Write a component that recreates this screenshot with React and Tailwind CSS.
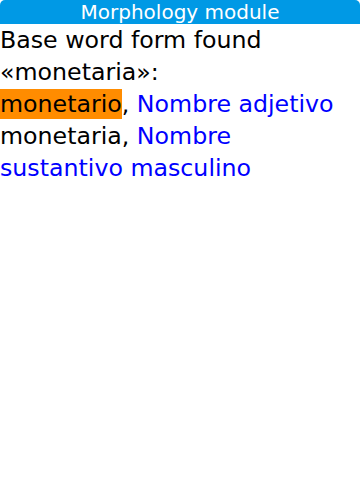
import React from 'react';

const App = () => {
    return (
        <div className="w-[360px] h-[480px] bg-white overflow-hidden font-['DejaVu_Sans',sans-serif]">
            <div className="h-[24px] bg-[#0099e5] rounded-t-[5px] flex items-center justify-center text-white text-[20px] leading-[24px]">
                Morphology module
            </div>
            <div className="text-[23.7px] leading-[32px] text-black">
                <div>Base word form found «monetaria»:</div>
                <div>
                    <span className="bg-[#ff8c00] py-[1px]">monetario</span>, <span className="text-[#0000ff]">Nombre adjetivo</span>
                </div>
                <div>
                    monetaria, <span className="text-[#0000ff]">Nombre sustantivo masculino</span>
                </div>
            </div>
        </div>
    );
};

export default App;
